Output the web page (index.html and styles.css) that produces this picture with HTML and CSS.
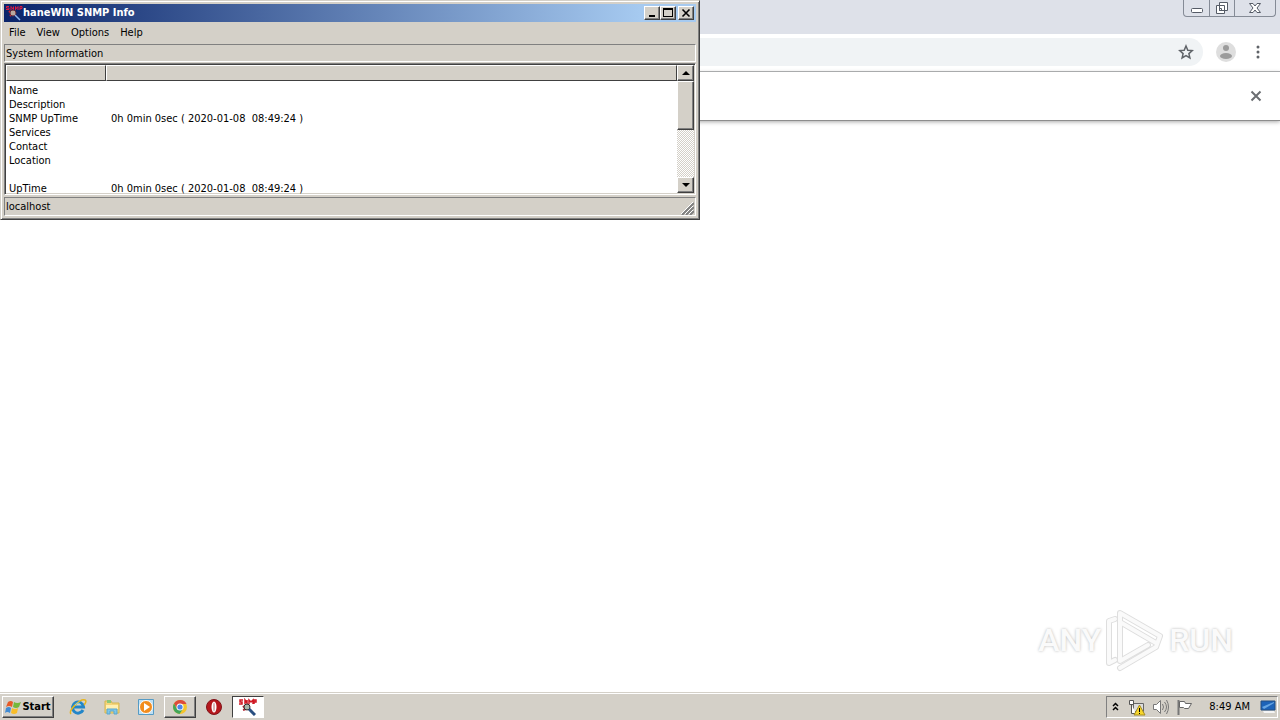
FILE: index.html
```html
<!DOCTYPE html>
<html lang="en">
<head>
<meta charset="utf-8">
<title>haneWIN SNMP Info</title>
<link rel="stylesheet" href="styles.css">
</head>
<body>
<main class="desktop">
  <section class="browser" aria-label="Browser">
    <div class="browser-title">
      <div class="browser-controls">
        <button aria-label="Minimize browser"><svg width="14" height="16" viewBox="0 0 14 16"><rect x="1.500" y="8.500" width="11" height="4" rx="1" fill="#fff" stroke="#555b66"/></svg></button>
        <button aria-label="Restore browser"><svg width="14" height="16" viewBox="0 0 14 16"><path d="M4.500 2.500h8v8h-8zM1.500 5.500h8v8h-8z" fill="#fff" stroke="#555b66"/><path d="M4.500 8.500h2v2h-2z" fill="none" stroke="#555b66"/></svg></button>
        <button class="wide" aria-label="Close browser"><svg width="14" height="16" viewBox="0 0 14 16"><path d="M1.500 3.500h3.500l2 2.500 2-2.500h3.500L9 8l3.500 4.500H9L7 10l-2 2.500H1.500L5 8z" fill="#fff" stroke="#555b66"/></svg></button>
      </div>
    </div>
    <div class="browser-toolbar">
      <div class="omnibox">
        <button aria-label="Bookmark this page"><svg width="16" height="16" viewBox="0 0 16 16"><path d="M8 2l1.800 4.200 4.500.4-3.400 3 1 4.400L8 11.600 4.100 14l1-4.400-3.400-3 4.500-.4z" fill="none" stroke="#5f6368" stroke-width="1.500"/></svg></button>
      </div>
      <button class="profile" aria-label="Profile"><svg width="20" height="20" viewBox="0 0 20 20"><circle cx="10" cy="10" r="10" fill="#dedede"/><circle cx="10" cy="6" r="3" fill="#9b9b9b"/><ellipse cx="10" cy="14" rx="6" ry="3" fill="#9b9b9b"/></svg></button>
      <button class="more" aria-label="Browser menu"><svg width="16" height="16" viewBox="0 0 16 16" fill="#5f6368"><circle cx="8" cy="3" r="1.500"/><circle cx="8" cy="8" r="1.500"/><circle cx="8" cy="13" r="1.500"/></svg></button>
    </div>
    <div class="infobar">
      <button aria-label="Dismiss"><svg width="12" height="12" viewBox="0 0 12 12"><path d="M1.500 1.500l9 9M10.500 1.500l-9 9" stroke="#6b6e72" stroke-width="2"/></svg></button>
    </div>
    <div class="page"></div>
  </section>

  <section class="window" aria-label="haneWIN SNMP Info">
    <header class="titlebar">
      <svg width="18" height="16" viewBox="0 0 18 16"><path d="M4 1.500H1.500V3H4v1.500H1M6 5V1.500l2.500 3v-3M10.500 5V1.500l1 2 1.500-2V5M15 5V1.500h2v2h-2" fill="none" stroke="#e01840"/><path d="M4 6l3 3-2 2" fill="none" stroke="#d02030" stroke-width="2"/><circle cx="8" cy="8" r="3" fill="#b9a9a0" stroke="#6b2c38"/><path d="M10 10l5 5" stroke="#8fb7f0" stroke-width="1.500"/></svg>
      <h1>haneWIN SNMP Info</h1>
      <div class="caption-buttons">
        <button class="raised" aria-label="Minimize"><svg width="14" height="12" viewBox="0 0 14 12"><path d="M4 8h6v2H4z"/></svg></button>
        <button class="raised" aria-label="Maximize"><svg width="14" height="12" viewBox="0 0 14 12"><path d="M2 1h10v9H2zM3 3v6h8V3z" fill-rule="evenodd"/></svg></button>
        <button class="raised close" aria-label="Close"><svg width="14" height="12" viewBox="0 0 14 12"><path d="M3.500 2.500l7 7M10.500 2.500l-7 7" stroke="#000" stroke-width="1.600"/></svg></button>
      </div>
    </header>
    <nav class="menu"><button>File</button><button>View</button><button>Options</button><button>Help</button></nav>
    <div class="pane">System Information</div>
    <div class="list">
      <table>
        <colgroup><col class="key"><col></colgroup>
        <thead><tr><th aria-label="Item"></th><th aria-label="Value"></th></tr></thead>
        <tbody>
          <tr><td>Name</td><td></td></tr>
          <tr><td>Description</td><td></td></tr>
          <tr><td>SNMP UpTime</td><td>0h 0min 0sec ( 2020-01-08&nbsp; 08:49:24 )</td></tr>
          <tr><td>Services</td><td></td></tr>
          <tr><td>Contact</td><td></td></tr>
          <tr><td>Location</td><td></td></tr>
          <tr><td>&nbsp;</td><td></td></tr>
          <tr><td>UpTime</td><td>0h 0min 0sec ( 2020-01-08&nbsp; 08:49:24 )</td></tr>
        </tbody>
      </table>
      <div class="scrollbar">
        <button class="raised arrow" aria-label="Scroll up"><svg width="8" height="4" viewBox="0 0 8 4"><path d="M0 4l4-4 4 4z"/></svg></button>
        <div class="raised thumb"></div>
        <button class="raised arrow bottom" aria-label="Scroll down"><svg width="8" height="4" viewBox="0 0 8 4"><path d="M0 0l4 4 4-4z"/></svg></button>
      </div>
    </div>
    <footer class="pane status"><span>localhost</span><svg width="13" height="13" viewBox="0 0 13 13"><path d="M1 13L13 1M5 13l8-8M9 13l4-4" stroke="#808080" stroke-width="2"/><path d="M0 12L12 0M4 12l8-8M8 12l4-4" stroke="#fff"/></svg></footer>
  </section>

  <div class="watermark">
    <span>ANY</span>
    <svg width="60" height="64" viewBox="0 0 60 64"><g fill="none" stroke-linejoin="round" stroke-linecap="round"><path id="mark" d="M10 11l-6 2v42l6-3M15 46V5l40 23M15 14l36 21M15 60l36-21 4-11M15 46v7l28-16" stroke="#dedede" stroke-width="6"/><path d="M10 11l-6 2v42l6-3M15 46V5l40 23M15 14l36 21M15 60l36-21 4-11M15 46v7l28-16" stroke="#fafafa" stroke-width="4"/></g></svg>
    <span>RUN</span>
  </div>
</main>

<footer class="taskbar">
  <button class="raised start"><svg width="17" height="17" viewBox="0 0 17 17"><path d="M3 3q3-2 5 0L7 8Q4 6 1 8z" fill="#e75a27"/><path d="M9 3q3 2 7 0l-2 5q-3 2-6 0z" fill="#75b83b"/><path d="M1 9q3-2 5 0l-1 5q-3-2-5 0z" fill="#418bd3"/><path d="M7 9q3 2 6 0l-1 5q-3 2-6 0z" fill="#f9bd28"/></svg>Start</button>
  <nav class="tasks">
    <button aria-label="Internet Explorer"><svg width="18" height="18" viewBox="0 0 18 18"><path d="M14 12a5.500 5.500 0 1 1 .5-3H5" fill="none" stroke="#2386c8" stroke-width="3"/><path d="M2 16c-3-3 9-16 14-14 2 1 0 4-1 5" fill="none" stroke="#e7b51c" stroke-width="1.500"/><path d="M6 7q3-4 6 0" fill="none" stroke="#7cd1f5"/></svg></button>
    <button aria-label="File Explorer"><svg width="18" height="18" viewBox="0 0 18 18"><path d="M2 3h6l1 2h7v10H2z" fill="#f4d57a" stroke="#d5b64e"/><path d="M4 2h4v3H4z" fill="#8cc779"/><path d="M3 7h12v4H3z" fill="#fff0b0"/><path d="M4 16v-5h10v5h-3v-3H7v3z" fill="#7fc6e8" stroke="#58a7cf"/></svg></button>
    <button aria-label="Media Player"><svg width="18" height="18" viewBox="0 0 18 18"><path d="M1.500 1.500h15v15h-15z" fill="#bfe0f4" stroke="#559bc5"/><circle cx="9" cy="9" r="6.500" fill="#f28c1d" stroke="#fff"/><path d="M7 5l6 4-6 4z" fill="#fff"/></svg></button>
    <button class="raised" aria-label="Chrome"><svg width="16" height="16" viewBox="0 0 16 16"><circle cx="8" cy="8" r="7" fill="#f5c52c"/><path d="M2 4.500A7 7 0 0 1 14.500 5H8L5 9.500z" fill="#dc4c3c"/><path d="M2 4.500A7 7 0 0 0 7.500 15l3.500-5H5z" fill="#42a65a"/><circle cx="8" cy="8" r="3.500" fill="#fff"/><circle cx="8" cy="8" r="2.600" fill="#4c86e8"/></svg></button>
    <button aria-label="Opera"><svg width="18" height="18" viewBox="0 0 18 18"><circle cx="9" cy="9" r="7.500" fill="#b5171c" stroke="#801319"/><ellipse cx="9" cy="9" rx="2.500" ry="5.500" fill="#fff"/><ellipse cx="9" cy="9" rx="1" ry="4.500" fill="#d9b1b1"/></svg></button>
    <button class="pressed" aria-label="haneWIN SNMP Info"><svg width="18" height="18" viewBox="0 0 18 18"><path d="M4 2H1v2h2v2H0M6 6V2l2 3V2M10 6V2l2 2 2-2v4M15 6V2h2v2h-2" fill="none" stroke="#cf1722" stroke-width="1.500"/><path d="M4 8l3 3-3 1" fill="none" stroke="#b12a35" stroke-width="2"/><circle cx="8" cy="9" r="3" fill="#a7b6aa" stroke="#352b2b"/><path d="M10 11l6 6" stroke="#294e80" stroke-width="3"/></svg></button>
  </nav>
  <div class="tray">
    <button aria-label="Show hidden icons"><svg width="7" height="10" viewBox="0 0 7 10"><path d="M1 4l2.500-2.500L6 4M1 8l2.500-2.500L6 8" fill="none" stroke="#000" stroke-width="1.500"/></svg></button>
    <svg class="network" width="18" height="17" viewBox="0 0 18 17"><path d="M5.500 4.500h10v8h-10z" fill="#ddd" stroke="#666"/><path d="M1.500 1.500h4v4h-4zM3.500 5.500v9H8" fill="#fff" stroke="#555"/><path d="M11.500 6l5.500 10H6z" fill="#f6d52b" stroke="#a38b24"/><path d="M11 9h1v4h-1zM11 14h1v1h-1z"/></svg>
    <svg class="sound" width="17" height="16" viewBox="0 0 17 16"><path d="M1.500 5.500h3l4-4v13l-4-4h-3z" fill="#fff" stroke="#777"/><path d="M10.500 5q2 3 0 6M12.500 3q4 5 0 10M14.500 1q4 7 0 14" fill="none" stroke="#777"/></svg>
    <svg class="flag" width="17" height="16" viewBox="0 0 17 16"><path d="M2.500 1v15" stroke="#777" stroke-width="2"/><path d="M3.500 2.500h5l1 2h6l-3 5h-4l-1-1h-4z" fill="#fff" stroke="#666"/></svg>
    <time>8:49 AM</time>
    <button class="show-desktop" aria-label="Show desktop"><svg width="16" height="14" viewBox="0 0 16 14"><path d="M1 1h14v9H1z" fill="#1d63b8" stroke="#254e80"/><path d="M2 7l12-5v1L4 9z" fill="#67a6e3"/><path d="M3 11h11l1 2H4z" fill="#f4f4f4"/></svg></button>
  </div>
</footer>
</body>
</html>
```
FILE: styles.css
```css
* { box-sizing: border-box; }
body {
  margin: 0;
  height: 100vh;
  display: flex;
  flex-direction: column;
  overflow: hidden;
  font: 11px/14px "DejaVu Sans Condensed", "Noto Sans", sans-serif;
  color: #000;
  background: #fff;
}
button {
  border: 0;
  margin: 0;
  padding: 0;
  font: inherit;
  color: inherit;
  background: none;
  display: flex;
  align-items: center;
  justify-content: center;
}
svg { display: block; flex: none; }
.desktop { position: relative; flex: 1; }
.raised {
  background: #d4d0c8;
  border: 1px solid;
  border-color: #fff #404040 #404040 #fff;
  box-shadow: inset -1px -1px #808080;
}
.browser { height: 100%; display: flex; flex-direction: column; }
.browser-title { height: 34px; background: #dee1e9; display: flex; justify-content: flex-end; }
.browser-controls {
  display: flex;
  height: 17px;
  margin-right: 4px;
  border: 1px solid #858b96;
  border-top: 0;
  border-radius: 0 0 4px 4px;
}
.browser-controls button { width: 25px; }
.browser-controls button + button { border-left: 1px solid #858b96; }
.browser-controls .wide { width: 41px; }
.browser-toolbar {
  height: 38px;
  display: flex;
  align-items: center;
  padding: 0 14px 1px 0;
  border-bottom: 1px solid #a9abad;
}
.omnibox {
  flex: 1;
  height: 28px;
  display: flex;
  justify-content: flex-end;
  align-items: center;
  padding-right: 9px;
  background: #f0f3f5;
  border-radius: 0 14px 14px 0;
}
.profile { margin: 0 14px 0 13px; }
.more { width: 16px; }
.infobar {
  height: 49px;
  display: flex;
  justify-content: flex-end;
  align-items: center;
  padding-right: 18px;
  border-bottom: 1px solid #8d8d8d;
  box-shadow: 0 1px 4px #aaa;
}
.page { flex: 1; }
.window {
  position: absolute;
  top: 0;
  left: 0;
  width: 700px;
  max-width: 100%;
  padding: 3px;
  background: #d4d0c8;
  border: 1px solid;
  border-color: #d4d0c8 #404040 #404040 #d4d0c8;
  box-shadow: inset 1px 1px #fff, inset -1px -1px #808080;
}
.titlebar {
  height: 18px;
  display: flex;
  align-items: center;
  padding: 0 2px 0 1px;
  background: linear-gradient(90deg, #0a246a, #a6caf0 92%);
  color: #fff;
}
.titlebar h1 { margin: 0; font-size: 11px; line-height: 14px; font-weight: bold; }
.caption-buttons { display: flex; margin-left: auto; }
.caption-buttons button { width: 16px; height: 14px; }
.caption-buttons .close { margin-left: 2px; }
.menu { display: flex; gap: 11px; padding: 3px 5px; height: 22px; }
.pane {
  height: 18px;
  padding: 2px 1px 0;
  border: 1px solid;
  border-color: #808080 #fff #fff #808080;
}
.list {
  display: flex;
  height: 132px;
  margin: 1px 0 2px;
  border: 1px solid;
  border-color: #808080 #fff #fff #808080;
  box-shadow: inset 1px 1px #404040, inset -1px -1px #d4d0c8;
  padding: 1px 1px 1px 1px;
  background: #fff;
  background-clip: padding-box;
}
table { flex: 1; table-layout: fixed; border-collapse: separate; border-spacing: 0; align-self: flex-start; }
.key { width: 100px; }
th {
  height: 16px;
  padding: 0;
  background: #d4d0c8;
  border: 1px solid;
  border-color: #fff #404040 #404040 #fff;
}
td { padding: 0 3px; height: 14px; white-space: nowrap; }
td + td { padding-left: 5px; }
tbody tr:first-child td { padding-top: 3px; }
.scrollbar {
  width: 17px;
  display: flex;
  flex-direction: column;
  background: repeating-conic-gradient(#d4d0c8 0 25%, #fff 0 50%) 0 0 / 2px 2px;
}
.arrow { height: 16px; }
.thumb { height: 49px; }
.bottom { margin-top: auto; }
.status { height: 19px; display: flex; justify-content: space-between; }
.status svg { align-self: flex-end; }
.watermark {
  position: absolute;
  right: 47px;
  bottom: 20px;
  display: flex;
  align-items: center;
  gap: 4px;
  font: 500 32px/40px Roboto, "Liberation Sans", sans-serif;
  color: #fafafa;
  text-shadow: 0 0 3px #b8b8b8;
}
.taskbar {
  height: 28px;
  display: flex;
  align-items: center;
  gap: 8px;
  padding: 1px 2px 0;
  background: #d4d0c8;
  border-top: 1px solid #d4d0c8;
  box-shadow: inset 0 1px #fff;
}
.start { width: 52px; height: 22px; font-weight: bold; }
.tasks { display: flex; gap: 2px; }
.tasks button { width: 32px; height: 22px; }
.pressed {
  background: #fff;
  border: 1px solid;
  border-color: #404040 #fff #fff #404040;
}
.tray {
  margin-left: auto;
  height: 22px;
  display: flex;
  align-items: center;
  padding: 0 1px 0 5px;
  border: 1px solid;
  border-color: #808080 #fff #fff #808080;
}
.network { margin-left: 9px; }
.sound { margin-left: 6px; }
.flag { margin-left: 7px; }
.tray time { margin-left: 16px; }
.show-desktop { margin-left: 10px; }
```
